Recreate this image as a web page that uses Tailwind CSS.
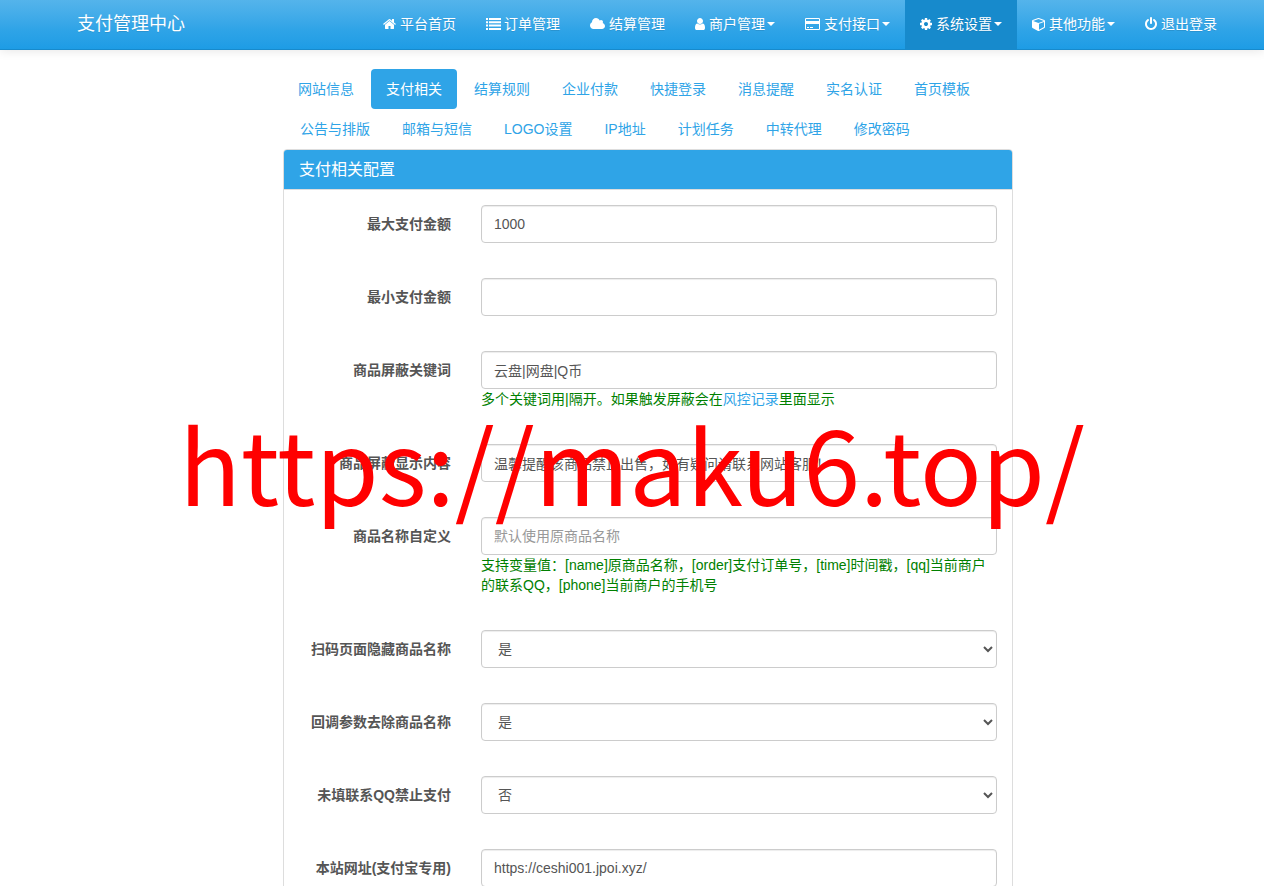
<!DOCTYPE html>
<html lang="zh-CN">
<head>
<meta charset="utf-8">
<title>支付管理中心</title>
<script src="https://cdn.jsdelivr.net/npm/@tailwindcss/browser@4"></script>
</head>
<body class="relative overflow-x-hidden bg-white text-sm leading-5 text-[#555555] font-['Liberation_Sans','Noto_Sans_CJK_SC',sans-serif]">

<header class="h-[50px] border-b border-[#178acc] bg-linear-to-b from-[#54b4eb] via-[#2fa4e7] via-60% to-[#1d9ce5] pl-[30px] shadow-[0_1px_10px_rgba(0,0,0,0.1)]">
  <nav class="mx-auto flex max-w-[1170px] items-start justify-between whitespace-nowrap text-white [text-shadow:0_1px_0_rgba(0,0,0,0.1)]">
    <a href="#" class="px-[15px] py-3 text-lg leading-6">支付管理中心</a>
    <ul class="flex">
      <li><a href="#" class="flex h-[50px] items-center px-[15px] pb-0.5"><svg class="mr-1 h-3.5 w-[13px] fill-current" viewBox="64 0 1664 1792"><path d="M1472 992v480q0 26-19 45t-45 19h-384v-384h-256v384h-384q-26 0-45-19t-19-45v-480q0-1 .5-3t.5-3l575-474 575 474q1 2 1 6zm223-69l-62 74q-8 9-21 11h-3q-13 0-21-7l-692-577-692 577q-12 8-24 7-13-2-21-11l-62-74q-8-10-7-23.5t11-21.5l719-599q32-26 76-26t76 26l244 204v-195q0-14 9-23t23-9h192q14 0 23 9t9 23v408l219 182q10 8 11 21.5t-7 23.5z"/></svg>平台首页</a></li>
      <li><a href="#" class="flex h-[50px] items-center px-[15px] pb-0.5"><svg class="mr-[3px] h-3.5 w-[15px] fill-current" viewBox="0 0 15 14"><path d="M0 1h2v2H0zM3 1h12v2H3zM0 4.300h2v2H0zM3 4.300h12v2H3zM0 7.600h2v2H0zM3 7.600h12v2H3zM0 11h2v2H0zM3 11h12v2H3z"/></svg>订单管理</a></li>
      <li><a href="#" class="flex h-[50px] items-center px-[15px] pb-0.5"><svg class="mr-1 h-3.5 w-[15px] fill-current" viewBox="0 0 1920 1792"><path d="M1920 1152q0 159-112.5 271.5t-271.5 112.5h-1088q-185 0-316.5-131.5t-131.5-316.5q0-132 71-241.5t187-163.5q-2-28-2-43 0-212 150-362t362-150q158 0 286.500 88t187.500 230q70-62 166-62 106 0 181 75t75 181q0 75-41 138 129 30 213 134.500t84 239.500z"/></svg>结算管理</a></li>
      <li><a href="#" class="flex h-[50px] items-center px-[15px] pb-0.5"><svg class="mr-1 h-3.5 w-2.5 fill-current" viewBox="256 0 1280 1792"><path d="M1536 1399q0 109-62.5 187t-150.5 78h-854q-88 0-150.5-78t-62.500-187q0-85 8.500-160.500t31.500-152 58.500-131 94-89 134.500-34.500q131 128 313 128t313-128q76 0 134.500 34.500t94 89 58.500 131 31.500 152 8.500 160.500zm-256-887q0 159-112.500 271.500t-271.500 112.500-271.500-112.500-112.500-271.500 112.500-271.500 271.500-112.500 271.500 112.500 112.500 271.500z"/></svg>商户管理<span class="ml-0.5 border-x-4 border-t-4 border-x-transparent border-t-white"></span></a></li>
      <li><a href="#" class="flex h-[50px] items-center px-[15px] pb-0.5"><svg class="mr-1 h-3.5 w-[15px] fill-current" viewBox="0 0 1920 1792"><path d="M1760 128q66 0 113 47t47 113v1216q0 66-47 113t-113 47h-1600q-66 0-113-47t-47-113v-1216q0-66 47-113t113-47h1600zm-1600 128q-13 0-22.500 9.500t-9.500 22.500v224h1664v-224q0-13-9.500-22.500t-22.500-9.500h-1600zm1600 1280q13 0 22.500-9.500t9.500-22.500v-608h-1664v608q0 13 9.500 22.500t22.500 9.500h1600zm-1504-128v-128h256v128h-256zm384 0v-128h384v128h-384z"/></svg>支付接口<span class="ml-0.5 border-x-4 border-t-4 border-x-transparent border-t-white"></span></a></li>
      <li><a href="#" class="flex h-[50px] items-center bg-[#178acc] px-[15px] pb-0.5"><svg class="mr-1 h-3.5 w-3 fill-current" viewBox="128 0 1536 1792"><path d="M1152 896q0-106-75-181t-181-75-181 75-75 181 75 181 181 75 181-75 75-181zm512-109v222q0 12-8 23t-20 13l-185 28q-19 54-39 91 35 50 107 138 10 12 10 25t-9 23q-27 37-99 108t-94 71q-12 0-26-9l-138-108q-44 23-91 38-16 136-29 186-7 28-36 28h-222q-14 0-24.500-8.500t-11.500-21.500l-28-184q-49-16-90-37l-141 107q-10 9-25 9-14 0-25-11-126-114-165-168-7-10-7-23 0-12 8-23 15-21 51-66.500t54-70.500q-27-50-41-99l-183-27q-13-2-21-12.500t-8-23.500v-222q0-12 8-23t19-13l186-28q14-46 39-92-40-57-107-138-10-12-10-24 0-10 9-23 26-36 98.500-107.500t94.500-71.500q13 0 26 10l138 107q44-23 91-38 16-136 29-186 7-28 36-28h222q14 0 24.500 8.500t11.500 21.500l28 184q49 16 90 37l142-107q9-9 24-9 13 0 25 10 129 119 165 170 7 8 7 22 0 12-8 23-15 21-51 66.500t-54 70.500q26 50 41 98l183 28q13 2 21 12.500t8 23.500z"/></svg>系统设置<span class="ml-0.5 border-x-4 border-t-4 border-x-transparent border-t-white"></span></a></li>
      <li><a href="#" class="flex h-[50px] items-center px-[15px] pb-0.5"><svg class="mr-1 h-3.5 w-[13px] fill-current" viewBox="0 0 1664 1792"><path d="M896 1629l640-349v-636l-640 233v752zm-64-865l698-254-698-254-698 254zm832-252v768q0 35-18 65t-49 47l-704 384q-28 16-61 16t-61-16l-704-384q-31-17-49-47t-18-65v-768q0-40 23-73t61-47l704-256q22-8 44-8t44 8l704 256q38 14 61 47t23 73z"/></svg>其他功能<span class="ml-0.5 border-x-4 border-t-4 border-x-transparent border-t-white"></span></a></li>
      <li><a href="#" class="flex h-[50px] items-center px-[15px] pb-0.5"><svg class="mr-1 h-3.5 w-3 fill-current" viewBox="128 0 1536 1792"><path d="M1664 896q0 156-61 298t-164 245-245 164-298 61-298-61-245-164-164-245-61-298q0-182 80.500-343t226.500-270q43-32 95.500-25t83.500 50q32 42 24.500 94.500t-49.500 84.500q-98 74-151.500 181t-53.500 228q0 104 40.500 198.500t109.500 163.500 163.500 109.500 198.500 40.500 198.500-40.500 163.500-109.500 109.500-163.500 40.500-198.500q0-121-53.500-228t-151.500-181q-42-32-49.500-84.500t24.500-94.500q31-43 84-50t95 25q146 109 226.500 270t80.500 343zm-640-768v640q0 52-38 90t-90 38-90-38-38-90v-640q0-52 38-90t90-38 90 38 38 90z"/></svg>退出登录</a></li>
    </ul>
  </nav>
</header>

<main class="pl-8 pt-[19px]">
  <div class="mx-auto max-w-[730px]">
    <ul class="flex flex-wrap text-[#2fa4e7] [&>li+li]:ml-0.5">
      <li><a href="#" class="block px-[15px] py-2.5">网站信息</a></li>
      <li><a href="#" class="block rounded bg-[#2fa4e7] px-[15px] py-2.5 text-white">支付相关</a></li>
      <li><a href="#" class="block px-[15px] py-2.5">结算规则</a></li>
      <li><a href="#" class="block px-[15px] py-2.5">企业付款</a></li>
      <li><a href="#" class="block px-[15px] py-2.5">快捷登录</a></li>
      <li><a href="#" class="block px-[15px] py-2.5">消息提醒</a></li>
      <li><a href="#" class="block px-[15px] py-2.5">实名认证</a></li>
      <li><a href="#" class="block px-[15px] py-2.5">首页模板</a></li>
      <li><a href="#" class="block px-[15px] py-2.5">公告与排版</a></li>
      <li><a href="#" class="block px-[15px] py-2.5">邮箱与短信</a></li>
      <li><a href="#" class="block px-[15px] py-2.5">LOGO设置</a></li>
      <li><a href="#" class="block px-[15px] py-2.5">IP地址</a></li>
      <li><a href="#" class="block px-[15px] py-2.5">计划任务</a></li>
      <li><a href="#" class="block px-[15px] py-2.5">中转代理</a></li>
      <li><a href="#" class="block px-[15px] py-2.5">修改密码</a></li>
    </ul>

    <section class="rounded border border-[#dddddd] bg-white">
      <h3 class="rounded-t-[3px] border-b border-[#dddddd] bg-[#2fa4e7] px-[15px] py-2.5 text-base leading-[19px] text-white">支付相关配置</h3>
      <form class="flex flex-col gap-[35px] py-[15px]">
        <div class="grid grid-cols-4">
          <label for="maxmoney" class="px-[15px] pt-[9px] text-right font-bold">最大支付金额</label>
          <div class="col-span-3 px-[15px]"><input id="maxmoney" type="text" value="1000" class="block h-[38px] w-full rounded border border-[#cccccc] bg-white px-3 shadow-[inset_0_1px_1px_rgba(0,0,0,0.075)]"></div>
        </div>
        <div class="grid grid-cols-4">
          <label for="minmoney" class="px-[15px] pt-[9px] text-right font-bold">最小支付金额</label>
          <div class="col-span-3 px-[15px]"><input id="minmoney" type="text" class="block h-[38px] w-full rounded border border-[#cccccc] bg-white px-3 shadow-[inset_0_1px_1px_rgba(0,0,0,0.075)]"></div>
        </div>
        <div class="grid grid-cols-4">
          <label for="blockname" class="px-[15px] pt-[9px] text-right font-bold">商品屏蔽关键词</label>
          <div class="col-span-3 px-[15px]"><input id="blockname" type="text" value="云盘|网盘|Q币" class="block h-[38px] w-full rounded border border-[#cccccc] bg-white px-3 shadow-[inset_0_1px_1px_rgba(0,0,0,0.075)]"><p class="text-[#008000]">多个关键词用|隔开。如果触发屏蔽会在<a href="#" class="text-[#2fa4e7]">风控记录</a>里面显示</p></div>
        </div>
        <div class="grid grid-cols-4">
          <label for="blockalert" class="px-[15px] pt-[9px] text-right font-bold">商品屏蔽显示内容</label>
          <div class="col-span-3 px-[15px]"><input id="blockalert" type="text" value="温馨提醒该商品禁止出售，如有疑问请联系网站客服！" class="block h-[38px] w-full rounded border border-[#cccccc] bg-white px-3 shadow-[inset_0_1px_1px_rgba(0,0,0,0.075)]"></div>
        </div>
        <div class="grid grid-cols-4">
          <label for="ordername" class="px-[15px] pt-[9px] text-right font-bold">商品名称自定义</label>
          <div class="col-span-3 px-[15px]"><input id="ordername" type="text" placeholder="默认使用原商品名称" class="block h-[38px] w-full rounded border border-[#cccccc] bg-white px-3 shadow-[inset_0_1px_1px_rgba(0,0,0,0.075)] placeholder:text-[#999999]"><p class="text-[#008000]">支持变量值：[name]原商品名称，[order]支付订单号，[time]时间戳，[qq]当前商户的联系QQ，[phone]当前商户的手机号</p></div>
        </div>
        <div class="grid grid-cols-4">
          <label for="pagehide" class="px-[15px] pt-[9px] text-right font-bold">扫码页面隐藏商品名称</label>
          <div class="col-span-3 px-[15px]"><select id="pagehide" class="block h-[38px] w-full rounded border border-[#cccccc] bg-white px-3 shadow-[inset_0_1px_1px_rgba(0,0,0,0.075)]"><option>是</option><option>否</option></select></div>
        </div>
        <div class="grid grid-cols-4">
          <label for="notifyhide" class="px-[15px] pt-[9px] text-right font-bold">回调参数去除商品名称</label>
          <div class="col-span-3 px-[15px]"><select id="notifyhide" class="block h-[38px] w-full rounded border border-[#cccccc] bg-white px-3 shadow-[inset_0_1px_1px_rgba(0,0,0,0.075)]"><option>是</option><option>否</option></select></div>
        </div>
        <div class="grid grid-cols-4">
          <label for="forceqq" class="px-[15px] pt-[9px] text-right font-bold">未填联系QQ禁止支付</label>
          <div class="col-span-3 px-[15px]"><select id="forceqq" class="block h-[38px] w-full rounded border border-[#cccccc] bg-white px-3 shadow-[inset_0_1px_1px_rgba(0,0,0,0.075)]"><option>否</option><option>是</option></select></div>
        </div>
        <div class="grid grid-cols-4">
          <label for="siteurl" class="px-[15px] pt-[9px] text-right font-bold">本站网址(支付宝专用)</label>
          <div class="col-span-3 px-[15px]"><input id="siteurl" type="text" value="https://ceshi001.jpoi.xyz/" class="block h-[38px] w-full rounded border border-[#cccccc] bg-white px-3 shadow-[inset_0_1px_1px_rgba(0,0,0,0.075)]"></div>
        </div>
      </form>
    </section>
  </div>
</main>

<div class="pointer-events-none absolute inset-x-0 top-[398px] text-center text-[102px] leading-[128px] whitespace-nowrap text-[#ff0000] font-['Noto_Sans_CJK_SC',sans-serif]">https://maku6.top/</div>
</body>
</html>
